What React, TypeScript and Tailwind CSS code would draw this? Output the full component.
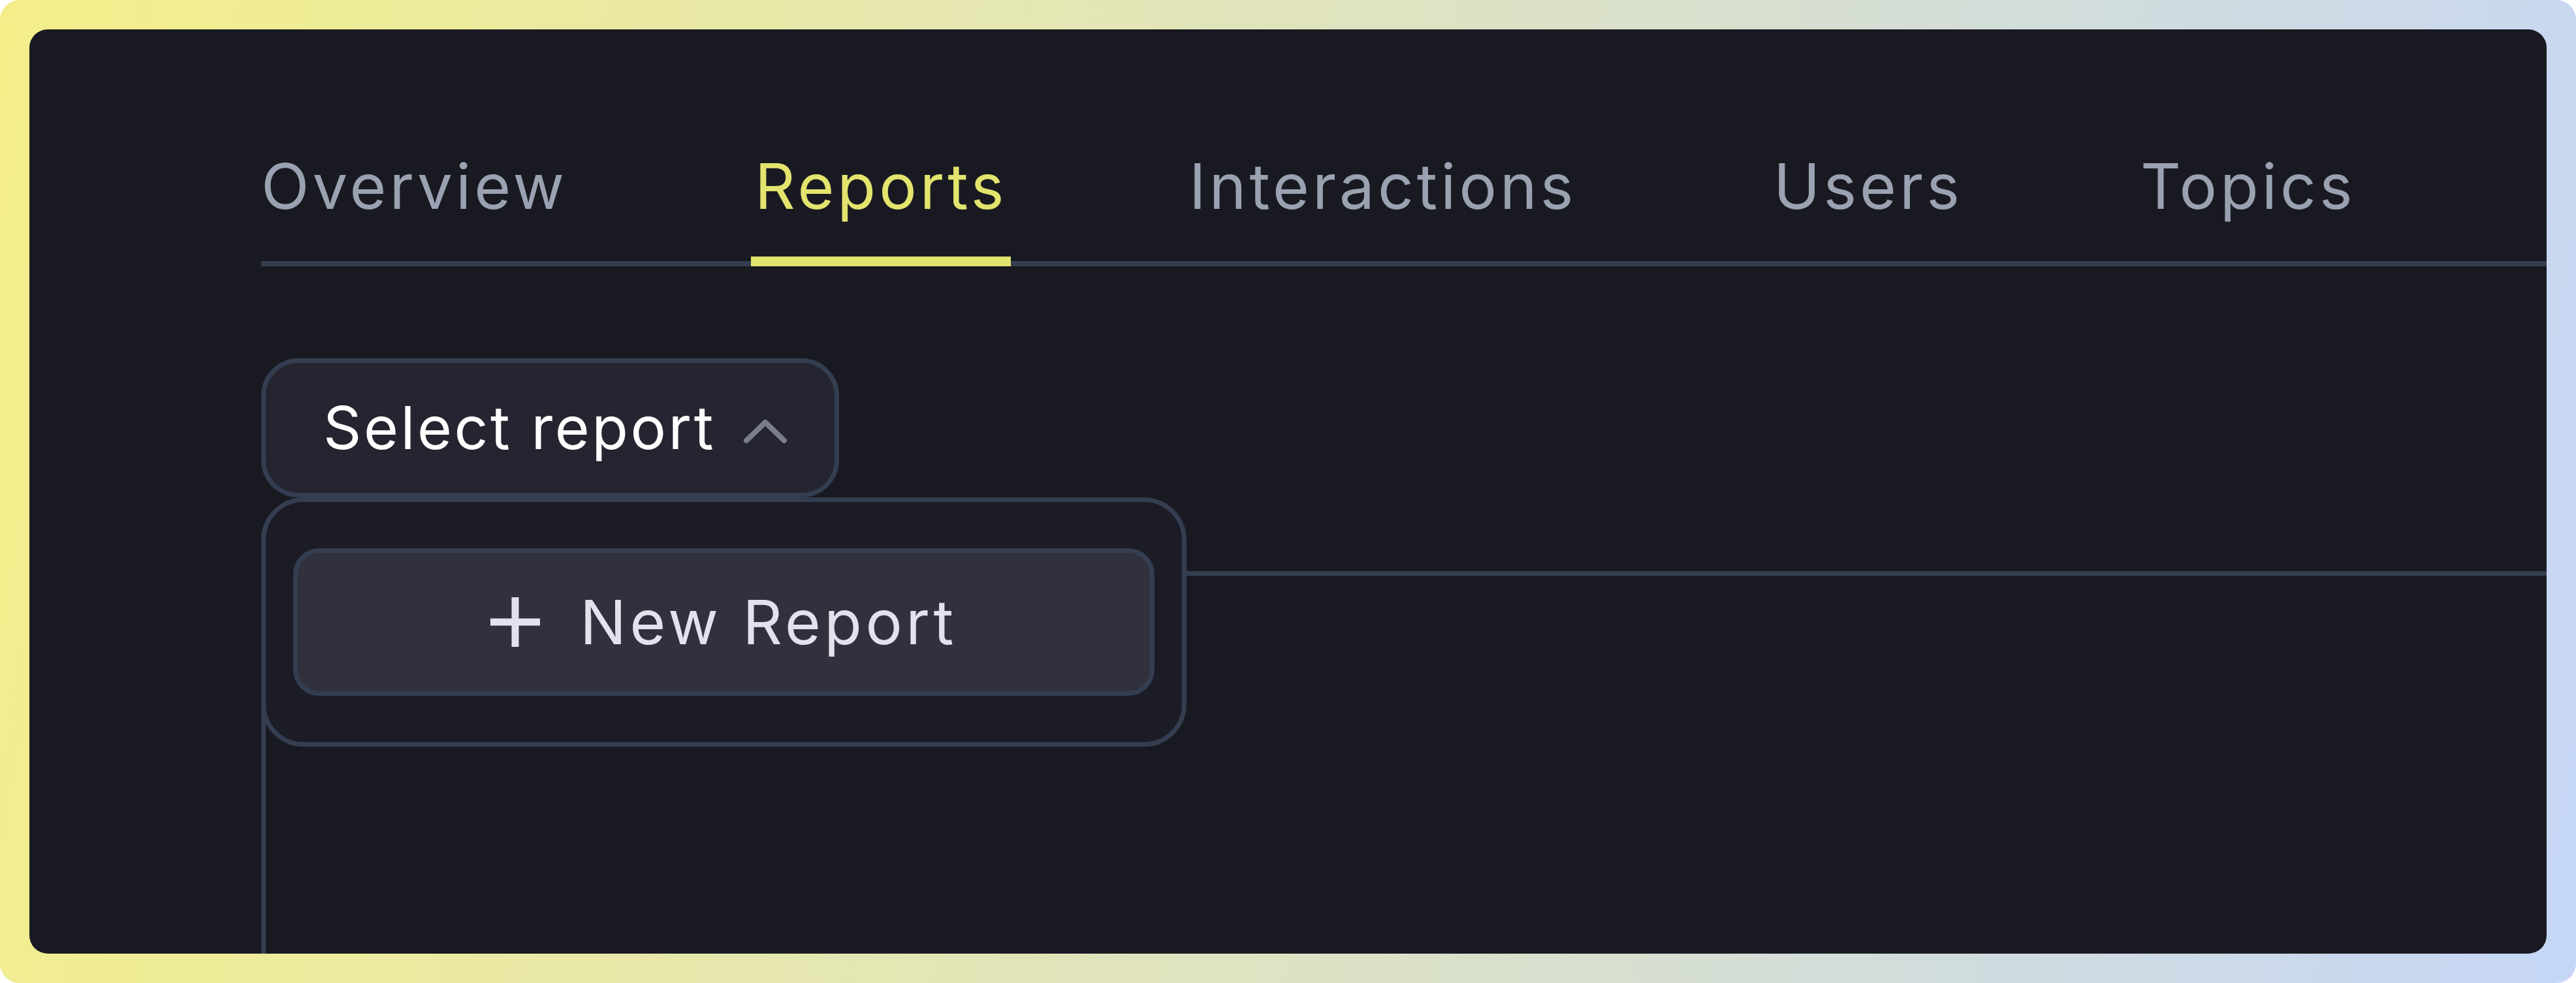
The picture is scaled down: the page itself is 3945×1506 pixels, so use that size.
import React from "react";

const tabs = [
    { label: "Overview", slot: "w-[750px]" },
    { label: "Reports", slot: "w-[671px]", active: true },
    { label: "Interactions", slot: "w-[895px]" },
    { label: "Users", slot: "w-[562px]" },
    { label: "Topics", slot: "w-[600px]" },
];

// ─── Icons ───────────────────────────────────────────────────────────────────
function ChevronUp() {
    return (
        <svg width="66" height="36" viewBox="0 0 66 36" fill="none" className="mt-[10px] overflow-visible">
            <polyline points="4,32 33,4 62,32" stroke="#7c7d8b" strokeWidth="8" strokeLinecap="round" strokeLinejoin="round" />
        </svg>
    );
}

function Plus() {
    return (
        <svg width="76" height="76" viewBox="0 0 76 76" fill="none">
            <line x1="38" y1="0" x2="38" y2="76" stroke="#e2e2ee" strokeWidth="11" />
            <line x1="0" y1="38" x2="76" y2="38" stroke="#e2e2ee" strokeWidth="11" />
        </svg>
    );
}

// ─── Tabs ────────────────────────────────────────────────────────────────────
function Tabs() {
    return (
        <div className="flex items-end border-b-[8px] border-[#353e50]">
            {tabs.map((t) => (
                <div key={t.label} className={`flex shrink-0 ${t.slot}`}>
                    {t.active ? (
                        <div className="border-b-[15px] border-[#e2e46e] -mb-[8px] pb-[60px] px-[6px]">
                            <span className="block text-[96px] leading-none tracking-[5px] text-[#e2e46e]">{t.label}</span>
                        </div>
                    ) : (
                        <div className="pb-[67px]">
                            <span className="block text-[96px] leading-none tracking-[5px] text-[#9aa1b1]">{t.label}</span>
                        </div>
                    )}
                </div>
            ))}
        </div>
    );
}

// ─── Report selector with open menu ──────────────────────────────────────────
function ReportSelect() {
    return (
        <div className="relative z-10 w-[885px]">
            <button className="flex h-[213px] w-[885px] items-center justify-between rounded-[57px] border-[7px] border-[#353e50] bg-[#242530] pl-[88px] pr-[73px]">
                <span className="text-[91px] leading-none tracking-[3.5px] text-white">Select report</span>
                <ChevronUp />
            </button>

            <div className="absolute left-0 top-full h-[382px] w-[1417px] rounded-[65px] border-[7px] border-[#353e50] bg-[#1c1c27] px-[42px] py-[71px]">
                <button className="flex h-[226px] w-full items-center justify-center gap-[61px] rounded-[40px] border-[7px] border-[#353e50] bg-[#31313d]">
                    <Plus />
                    <span className="text-[94px] leading-none tracking-[5.5px] text-[#e2e2ee]">New Report</span>
                </button>
            </div>
        </div>
    );
}

export default function App() {
    return (
        <div
            className="h-[1506px] w-[3945px] rounded-[30px] bg-[linear-gradient(100deg,#f4ef8a_0%,#dfe3c0_50%,#c5d6f6_100%)] p-[45px]"
            style={{ fontFamily: "Inter, 'Noto Sans', sans-serif" }}
        >
            <div className="h-full w-full overflow-hidden rounded-[28px] bg-[#191a21] pl-[355px] pt-[192px]">
                <Tabs />

                <div className="mt-[141px]">
                    <ReportSelect />
                </div>

                {/* content card, mostly covered by the open menu */}
                <div className="mt-[113px] h-[800px] rounded-tl-[60px] border-l-[7px] border-t-[7px] border-[#353e50]" />
            </div>
        </div>
    );
}
